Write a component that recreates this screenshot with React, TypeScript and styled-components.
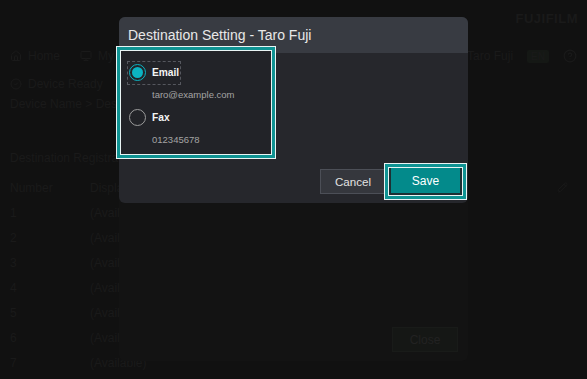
import { useState } from "react";
import styled, { createGlobalStyle, css } from "styled-components";
import { Home, Monitor, CircleCheck, CircleHelp, Pencil } from "lucide-react";

const colors = {
  pageBg: "#111111",
  dimText: "#1a1a1a",
  dimPanel: "#131313",
  headerBg: "#383b42",
  bodyBg: "#26272c",
  groupBg: "#222328",
  textPrimary: "#e8e8e8",
  textSecondary: "#a4a4a4",
  teal: "#0f9393",
  tealFill: "#038a8b",
  radio: "#0cb3c2",
  ringWhite: "#e9f4f4",
};

const GlobalStyle = createGlobalStyle`
  html, body {
    margin: 0;
    height: 100%;
    background: ${colors.pageBg};
    font-family: "Liberation Sans", Arial, sans-serif;
    overflow: hidden;
  }
  #root {
    height: 100%;
  }
`;

const focusRing = css`
  box-shadow:
    0 0 0 1px ${colors.ringWhite},
    0 0 0 4px ${colors.teal},
    0 0 0 5px ${colors.ringWhite};
`;

/* ---------- dimmed page behind the dialogs ---------- */

const Page = styled.div`
  position: relative;
  height: 100%;
  color: ${colors.dimText};
  font-size: 12px;
`;

const TopBar = styled.header`
  display: flex;
  justify-content: flex-end;
  align-items: center;
  height: 36px;
  padding: 0 9px;
`;

const Logo = styled.span`
  font-weight: 700;
  font-size: 13px;
  letter-spacing: 0.5px;
`;

const NavRow = styled.nav`
  display: flex;
  align-items: center;
  justify-content: space-between;
  height: 40px;
  padding: 0 10px;
`;

const Crumbs = styled.div`
  display: flex;
  align-items: center;
  gap: 20px;
`;

const Crumb = styled.span`
  display: flex;
  align-items: center;
  gap: 6px;
`;

const UserArea = styled.div`
  display: flex;
  align-items: center;
  gap: 14px;
`;

const Badge = styled.span`
  padding: 1px 4px;
  background: #151815;
  border-radius: 2px;
  font-size: 10px;
`;

const Status = styled.div`
  display: flex;
  align-items: center;
  gap: 6px;
  padding: 0 10px;
  height: 16px;
`;

const SubRow = styled.div`
  padding: 5px 10px 0;
  height: 16px;
`;

const SectionTitle = styled.h2`
  margin: 0;
  padding: 38px 10px 0;
  font-size: 12px;
  font-weight: 400;
`;

const Table = styled.div`
  display: flex;
  flex-direction: column;
  padding: 10px 10px 0;
`;

const TableRow = styled.div`
  display: grid;
  grid-template-columns: 80px 1fr 20px;
  align-items: center;
  height: 25px;
`;

/* ---------- dialogs ---------- */

const Layer = styled.div<{ $align: "center" | "start" }>`
  position: absolute;
  inset: 0;
  display: flex;
  justify-content: center;
  align-items: ${(p) => (p.$align === "center" ? "stretch" : "flex-start")};
  padding: 17px 0 18px;
  box-sizing: border-box;
`;

const ListDialog = styled.div`
  width: 349px;
  display: flex;
  flex-direction: column;
  justify-content: flex-end;
  align-items: flex-end;
  padding: 0 10px 9px;
  box-sizing: border-box;
  background: ${colors.dimPanel};
  border-radius: 6px;
`;

const DimButton = styled.button`
  width: 66px;
  height: 25px;
  background: #151715;
  border: 1px solid #191b19;
  color: #222222;
  font-family: inherit;
  font-size: 12px;
`;

const Dialog = styled.div`
  width: 349px;
  display: flex;
  flex-direction: column;
  background: ${colors.bodyBg};
  border-radius: 6px;
`;

const DialogHeader = styled.div`
  display: flex;
  align-items: center;
  height: 36px;
  padding: 0 9px;
  background: ${colors.headerBg};
  border-radius: 6px 6px 0 0;
`;

const Title = styled.h1`
  margin: 0;
  font-size: 14px;
  font-weight: 400;
  color: ${colors.textPrimary};
`;

const DialogBody = styled.div`
  display: flex;
  flex-direction: column;
  padding: 0 6px 8px 2px;
`;

const RadioGroup = styled.div`
  position: relative;
  width: 150px;
  margin-top: -2px;
  padding: 10px 6px 9px;
  box-sizing: border-box;
  display: flex;
  flex-direction: column;
  gap: 6px;
  background: ${colors.groupBg};
  ${focusRing}
`;

const Option = styled.div`
  display: flex;
  flex-direction: column;
  align-items: flex-start;
`;

const OptionLabel = styled.label<{ $focused: boolean }>`
  display: inline-flex;
  align-items: center;
  gap: 6px;
  padding: 2px 1px 3px 1px;
  border: 1px dashed ${(p) => (p.$focused ? "#55575e" : "transparent")};
  color: #f4f4f4;
  font-size: 10.2px;
  font-weight: 700;
  cursor: pointer;
`;

const RadioCircle = styled.span<{ $checked: boolean }>`
  width: 17px;
  height: 17px;
  box-sizing: border-box;
  border-radius: 50%;
  border: 1.5px solid ${(p) => (p.$checked ? colors.radio : "#9c9c9c")};
  display: flex;
  align-items: center;
  justify-content: center;

  &::after {
    content: "";
    width: 11px;
    height: 11px;
    border-radius: 50%;
    background: ${(p) => (p.$checked ? colors.radio : "transparent")};
  }
`;

const Detail = styled.div`
  margin-top: 4px;
  padding-left: 25px;
  font-size: 9.5px;
  line-height: 11px;
  color: ${colors.textSecondary};
`;

const Footer = styled.div`
  display: flex;
  justify-content: flex-end;
  align-items: center;
  gap: 3px;
  margin-top: 14px;
`;

const Button = styled.button<{ $primary?: boolean }>`
  font-family: inherit;
  cursor: pointer;
  ${(p) =>
    p.$primary
      ? css`
          width: 73px;
          height: 27px;
          background: ${colors.tealFill};
          border: 2px solid #1d3034;
          border-top: none;
          color: #ffffff;
          font-size: 12px;
          ${focusRing}
        `
      : css`
          width: 66px;
          height: 25px;
          background: #35373d;
          border: 1px solid #4c4f57;
          color: #e2e2e2;
          font-size: 11.6px;
        `}
`;

const rows = [1, 2, 3, 4, 5, 6, 7];

const destinations = [
  { id: "email", label: "Email", detail: "taro@example.com" },
  { id: "fax", label: "Fax", detail: "012345678" },
];

export default function App() {
  const [selected, setSelected] = useState("email");

  return (
    <>
      <GlobalStyle />
      <Page>
        <TopBar>
          <Logo>FUJIFILM</Logo>
        </TopBar>
        <NavRow>
          <Crumbs>
            <Crumb>
              <Home size={12} /> Home
            </Crumb>
            <Crumb>
              <Monitor size={12} /> My Devices
            </Crumb>
          </Crumbs>
          <UserArea>
            <span>Taro Fuji</span>
            <Badge>EN</Badge>
            <CircleHelp size={14} />
          </UserArea>
        </NavRow>
        <Status>
          <CircleCheck size={12} /> Device Ready
        </Status>
        <SubRow>Device Name &gt; Dest</SubRow>
        <SectionTitle>Destination Registration</SectionTitle>
        <Table>
          <TableRow>
            <span>Number</span>
            <span>Display Name</span>
            <Pencil size={11} />
          </TableRow>
          {rows.map((n) => (
            <TableRow key={n}>
              <span>{n}</span>
              <span>(Available)</span>
            </TableRow>
          ))}
        </Table>

        <Layer $align="center">
          <ListDialog>
            <DimButton>Close</DimButton>
          </ListDialog>
        </Layer>

        <Layer $align="start">
          <Dialog>
            <DialogHeader>
              <Title>Destination Setting - Taro Fuji</Title>
            </DialogHeader>
            <DialogBody>
              <RadioGroup role="radiogroup">
                {destinations.map((d) => (
                  <Option key={d.id}>
                    <OptionLabel
                      $focused={selected === d.id}
                      onClick={() => setSelected(d.id)}
                    >
                      <RadioCircle $checked={selected === d.id} />
                      {d.label}
                    </OptionLabel>
                    <Detail>{d.detail}</Detail>
                  </Option>
                ))}
              </RadioGroup>
              <Footer>
                <Button>Cancel</Button>
                <Button $primary>Save</Button>
              </Footer>
            </DialogBody>
          </Dialog>
        </Layer>
      </Page>
    </>
  );
}
